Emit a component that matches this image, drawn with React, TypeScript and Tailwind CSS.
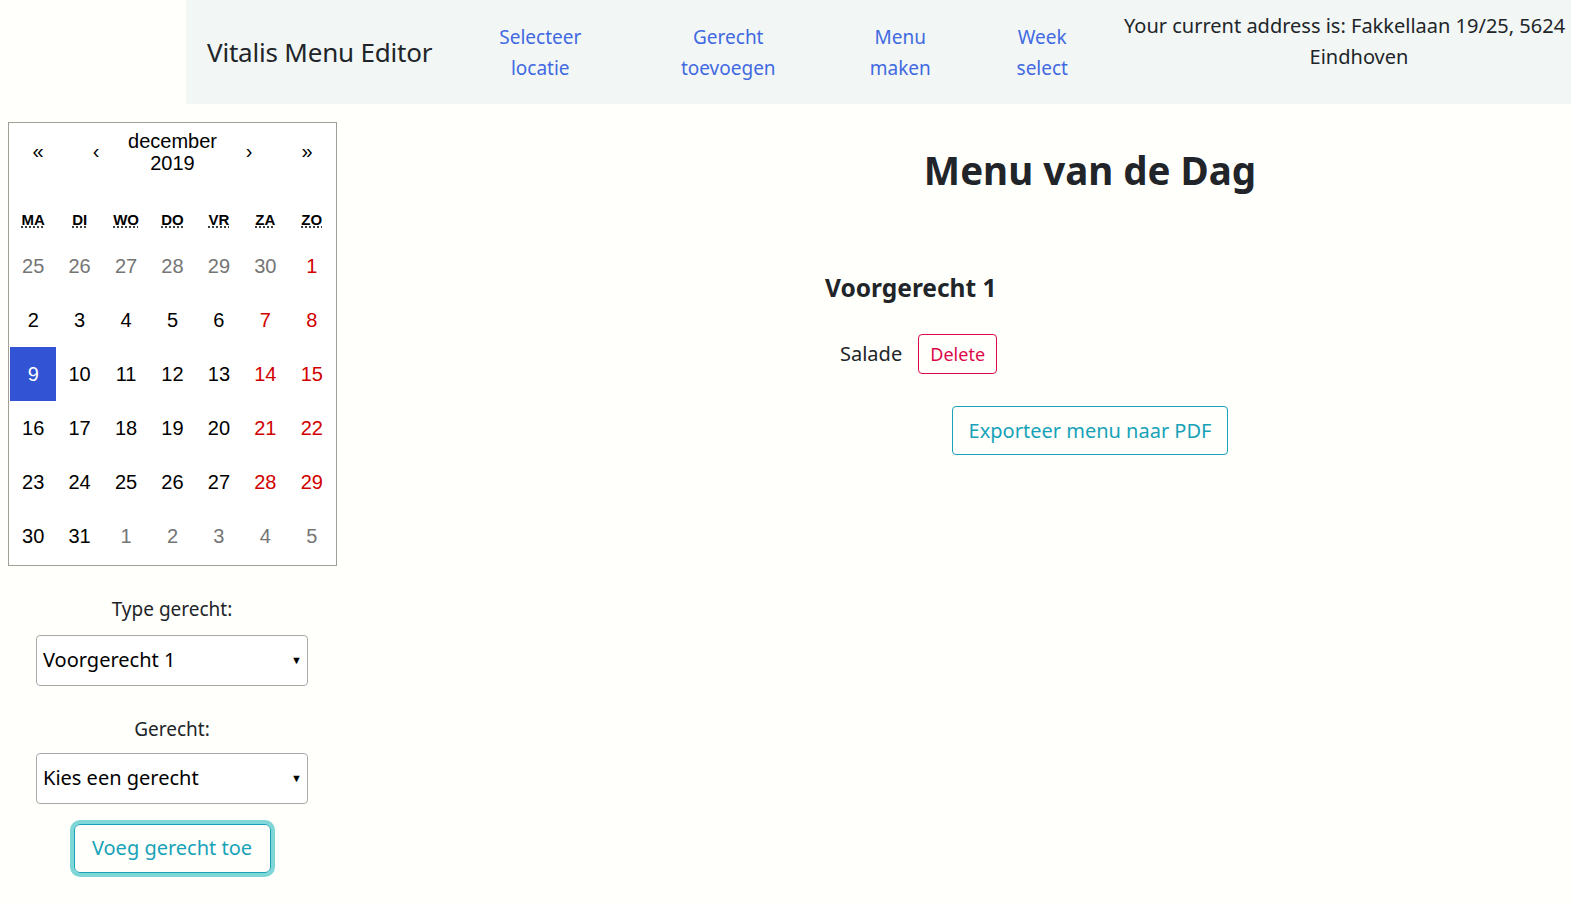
import React from "react";

const ubuntu = { fontFamily: '"Noto Sans", "Open Sans", sans-serif' };

type Cell = { d: number; kind: "other" | "normal" | "weekend" | "selected" };

const mk = (arr: number[], kind: Cell["kind"]): Cell[] => arr.map((d) => ({ d, kind }));

const weeks: Cell[][] = [
  [...mk([25, 26, 27, 28, 29, 30], "other"), ...mk([1], "weekend")],
  [...mk([2, 3, 4, 5, 6], "normal"), ...mk([7, 8], "weekend")],
  [...mk([9], "selected"), ...mk([10, 11, 12, 13], "normal"), ...mk([14, 15], "weekend")],
  [...mk([16, 17, 18, 19, 20], "normal"), ...mk([21, 22], "weekend")],
  [...mk([23, 24, 25, 26, 27], "normal"), ...mk([28, 29], "weekend")],
  [...mk([30, 31], "normal"), ...mk([1, 2, 3, 4, 5], "other")],
];

const days = ["MA", "DI", "WO", "DO", "VR", "ZA", "ZO"];

function Calendar() {
  return (
    <div
      className="w-[329px] border border-[#a0a096] bg-white text-black"
      style={{ fontFamily: '"Liberation Sans", Arial, sans-serif' }}
    >
      <div className="flex h-[58px] items-center text-[20px] leading-[22px]">
        <button className="-mt-[3px] w-[58px] text-center">«</button>
        <button className="-mt-[3px] w-[58px] text-center">‹</button>
        <span className="flex-1 text-center">december<br />2019</span>
        <button className="-mt-[3px] w-[58px] text-center">›</button>
        <button className="-mt-[3px] w-[58px] text-center">»</button>
      </div>
      <div className="grid grid-cols-7 px-[1px] pt-[22px] pb-[1px] text-center text-[15px] font-bold">
        {days.map((d) => (
          <div key={d} className="py-[6px]">
            <abbr style={{ textDecoration: "underline dotted", textUnderlineOffset: "2px" }}>{d}</abbr>
          </div>
        ))}
      </div>
      <div className="px-[1px] pb-[2px]">
        {weeks.map((w, i) => (
          <div key={i} className="grid grid-cols-7 text-center text-[20px]">
            {w.map((c, j) => (
              <div
                key={j}
                className={
                  "flex h-[54px] items-center justify-center " +
                  (c.kind === "other"
                    ? "text-[#757575]"
                    : c.kind === "weekend"
                    ? "text-[#d10000]"
                    : c.kind === "selected"
                    ? "bg-[#3153d4] text-white"
                    : "text-black")
                }
              >
                {c.d}
              </div>
            ))}
          </div>
        ))}
      </div>
    </div>
  );
}

function Select({ value }: { value: string }) {
  return (
    <div className="flex h-[51px] w-[272px] items-center justify-between rounded-[4px] border border-[#a9a9a9] bg-white pl-[6px] pr-[5px] text-[20px] text-black">
      <span>{value}</span>
      <span className="text-[11px]">▼</span>
    </div>
  );
}

export default function App() {
  return (
    <div className="min-h-[905px] w-full bg-[#fffffc] text-[#212529]" style={ubuntu}>
      <div className="flex">
        <div className="w-[186px] shrink-0" />
        <header className="flex h-[104px] flex-1 items-center bg-[#f2f7f6]">
          <div className="ml-[21px] text-[26px] leading-none tracking-[-0.2px] text-[#212529]">Vitalis Menu Editor</div>
          <nav className="ml-[38px] flex text-center text-[19px] leading-[31px] text-[#4169e1]">
            <a className="w-[140px] pt-[1px]">Selecteer<br />locatie</a>
            <a className="ml-[48px] w-[140px] pt-[1px]">Gerecht<br />toevoegen</a>
            <a className="ml-[62px] w-[80px] pt-[1px]">Menu<br />maken</a>
            <a className="ml-[62px] w-[80px] pt-[1px]">Week<br />select</a>
          </nav>
          <div className="ml-auto -mt-[23px] w-[447px] text-[20px] leading-[31px] text-[#212529]">
            <div className="whitespace-nowrap">Your current address is: Fakkellaan 19/25, 5624</div>
            <div className="pl-[23px] text-center">Eindhoven</div>
          </div>
        </header>
      </div>

      <div className="flex">
        <aside className="w-[345px] shrink-0 pl-[8px] pt-[18px]">
          <Calendar />
          <div className="flex w-[328px] flex-col items-center">
            <label className="mt-[28px] text-[19px] leading-[31px]">Type gerecht:</label>
            <div className="mt-[10px]"><Select value="Voorgerecht 1" /></div>
            <label className="mt-[28px] text-[19px] leading-[31px]">Gerecht:</label>
            <div className="mt-[8px]"><Select value="Kies een gerecht" /></div>
            <button className="mt-[20px] flex h-[49px] w-[197px] items-center justify-center rounded-[6px] border border-[#17a2b8] text-[20px] text-[#17a2b8] ring-4 ring-[#7fd6d6]">
              Voeg gerecht toe
            </button>
          </div>
        </aside>

        <main className="ml-auto w-[962px] shrink-0 pt-[38px]">
          <h1 className="text-center text-[38.5px] font-bold leading-[56px] text-[#212529]">Menu van de Dag</h1>
          <div className="ml-[216px] mt-[73px]">
            <h2 className="text-[24.5px] font-bold leading-[34px]">Voorgerecht 1</h2>
            <div className="ml-[15px] mt-[29px] flex items-center">
              <span className="text-[20px]">Salade</span>
              <button className="ml-[16px] h-[40px] w-[79px] rounded-[4px] border border-[#dc0a4a] text-[18px] text-[#dc0a4a]">Delete</button>
            </div>
          </div>
          <div className="mt-[32px] flex justify-center">
            <button className="h-[49px] w-[276px] rounded-[4px] border border-[#17a2b8] text-[20px] text-[#17a2b8]">
              Exporteer menu naar PDF
            </button>
          </div>
        </main>
      </div>
    </div>
  );
}
